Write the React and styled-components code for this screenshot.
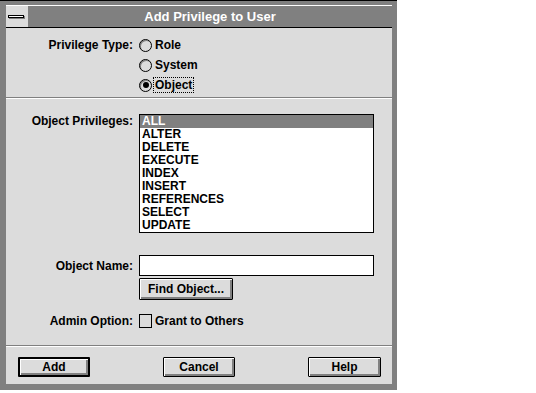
import styled, { createGlobalStyle } from "styled-components"

const GlobalStyle = createGlobalStyle`
  html, body {
    margin: 0;
    padding: 0;
    background: #fff;
  }
  body {
    font-family: "Liberation Sans", Arial, sans-serif;
  }
`

const Frame = styled.div`
  box-sizing: border-box;
  width: 397px;
  height: 390px;
  background: #808080;
  border-top: 1px solid #000;
  padding: 4px 5px 6px 6px;
  display: flex;
  flex-direction: column;
`

const TitleBar = styled.div`
  box-sizing: border-box;
  height: 23px;
  display: flex;
  border-top: 1px solid #fff;
  border-bottom: 1px solid #000;
`

const SysMenu = styled.div`
  width: 22px;
  background: #dcdcdc;
  display: flex;
  align-items: center;
  justify-content: center;
`

const SysBar = styled.span`
  display: block;
  width: 14px;
  height: 1px;
  background: #fff;
  border: 1px solid #000;
  box-shadow: 1px 1px 0 #808080;
  margin-right: 2px;
`

const Title = styled.div`
  flex: 1;
  background: #808080;
  color: #fff;
  font-size: 13px;
  font-weight: bold;
  display: flex;
  align-items: center;
  justify-content: center;
`

const Content = styled.div`
  flex: 1;
  background: #dcdcdc;
  display: flex;
  flex-direction: column;
  font-size: 12px;
  font-weight: bold;
  color: #000;
`

const Section = styled.div`
  box-sizing: border-box;
  height: ${(p) => p.$h}px;
  padding: ${(p) => p.$pad};
  display: flex;
  flex-direction: column;
`

const Separator = styled.div`
  height: 0;
  border-top: 1px solid #808080;
  border-bottom: 1px solid #fff;
`

const Row = styled.div`
  display: flex;
  align-items: ${(p) => p.$align || "center"};
  gap: 6px;
  margin-top: ${(p) => p.$mt || 0}px;
`

const Label = styled.div`
  width: 127px;
  flex: none;
  text-align: right;
  line-height: ${(p) => p.$lh || 20}px;
  white-space: nowrap;
`

const Options = styled.div`
  display: flex;
  flex-direction: column;
`

const Option = styled.label`
  height: 20px;
  display: flex;
  align-items: center;
  gap: 1px;
`

const Radio = styled.span`
  box-sizing: border-box;
  width: 13px;
  height: 13px;
  border: 1px solid #000;
  border-radius: 50%;
  box-shadow: inset 1px 1px 0 #808080;
  display: flex;
  align-items: center;
  justify-content: center;
  &::after {
    content: "";
    display: ${(p) => (p.$checked ? "block" : "none")};
    width: 6px;
    height: 6px;
    border-radius: 50%;
    background: #000;
  }
`

const OptionText = styled.span`
  padding: 0 1px;
  line-height: 14px;
  border: 1px dotted ${(p) => (p.$focus ? "#000" : "transparent")};
`

const ListBox = styled.ul`
  box-sizing: border-box;
  width: 235px;
  margin: 0;
  padding: 0;
  list-style: none;
  background: #fff;
  border: 1px solid #000;
`

const ListItem = styled.li`
  height: 13px;
  line-height: 13px;
  padding-left: 2px;
  background: ${(p) => (p.$selected ? "#808080" : "transparent")};
  color: ${(p) => (p.$selected ? "#fff" : "#000")};
`

const TextBox = styled.div`
  box-sizing: border-box;
  width: 235px;
  height: 21px;
  background: #fff;
  border: 1px solid #000;
`

const Button = styled.button`
  box-sizing: border-box;
  width: ${(p) => p.$w}px;
  height: ${(p) => p.$h}px;
  padding: 0;
  font-family: "Liberation Sans", Arial, sans-serif;
  font-size: 12px;
  font-weight: bold;
  color: #000;
  background: #dcdcdc;
  border: ${(p) => (p.$default ? 2 : 1)}px solid #000;
  border-radius: 1px;
  box-shadow: inset 1px 1px 0 #fff, inset -2px -2px 0 #808080;
`

const Spacer = styled.div`
  width: 127px;
  flex: none;
`

const Checkbox = styled.span`
  box-sizing: border-box;
  width: 13px;
  height: 14px;
  border: 1px solid #000;
  margin-right: 3px;
`

const CheckLabel = styled.label`
  display: flex;
  align-items: center;
`

const ButtonBar = styled.div`
  display: flex;
  justify-content: space-between;
  padding: 10px 11px 0 12px;
`

const privileges = [
  "ALL",
  "ALTER",
  "DELETE",
  "EXECUTE",
  "INDEX",
  "INSERT",
  "REFERENCES",
  "SELECT",
  "UPDATE",
]

const types = ["Role", "System", "Object"]

const App = () => {
  return (
    <>
      <GlobalStyle />
      <Frame>
        <TitleBar>
          <SysMenu>
            <SysBar />
          </SysMenu>
          <Title>Add Privilege to User</Title>
        </TitleBar>
        <Content>
          <Section $h={69} $pad="7px 0 2px 0">
            <Row $align="flex-start">
              <Label>Privilege Type:</Label>
              <Options>
                {types.map((t) => (
                  <Option key={t}>
                    <Radio $checked={t === "Object"} />
                    <OptionText $focus={t === "Object"}>{t}</OptionText>
                  </Option>
                ))}
              </Options>
            </Row>
          </Section>
          <Separator />
          <Section $h={246} $pad="15px 0 0 0">
            <Row $align="flex-start">
              <Label $lh={15}>Object Privileges:</Label>
              <ListBox>
                {privileges.map((p) => (
                  <ListItem key={p} $selected={p === "ALL"}>
                    {p}
                  </ListItem>
                ))}
              </ListBox>
            </Row>
            <Row $mt={22}>
              <Label>Object Name:</Label>
              <TextBox />
            </Row>
            <Row $mt={2}>
              <Spacer />
              <Button $w={94} $h={22}>Find Object...</Button>
            </Row>
            <Row $mt={11}>
              <Label>Admin Option:</Label>
              <CheckLabel>
                <Checkbox />
                Grant to Others
              </CheckLabel>
            </Row>
          </Section>
          <Separator />
          <ButtonBar>
            <Button $w={72} $h={20} $default>Add</Button>
            <Button $w={72} $h={20}>Cancel</Button>
            <Button $w={73} $h={20}>Help</Button>
          </ButtonBar>
        </Content>
      </Frame>
    </>
  )
}

export default App
